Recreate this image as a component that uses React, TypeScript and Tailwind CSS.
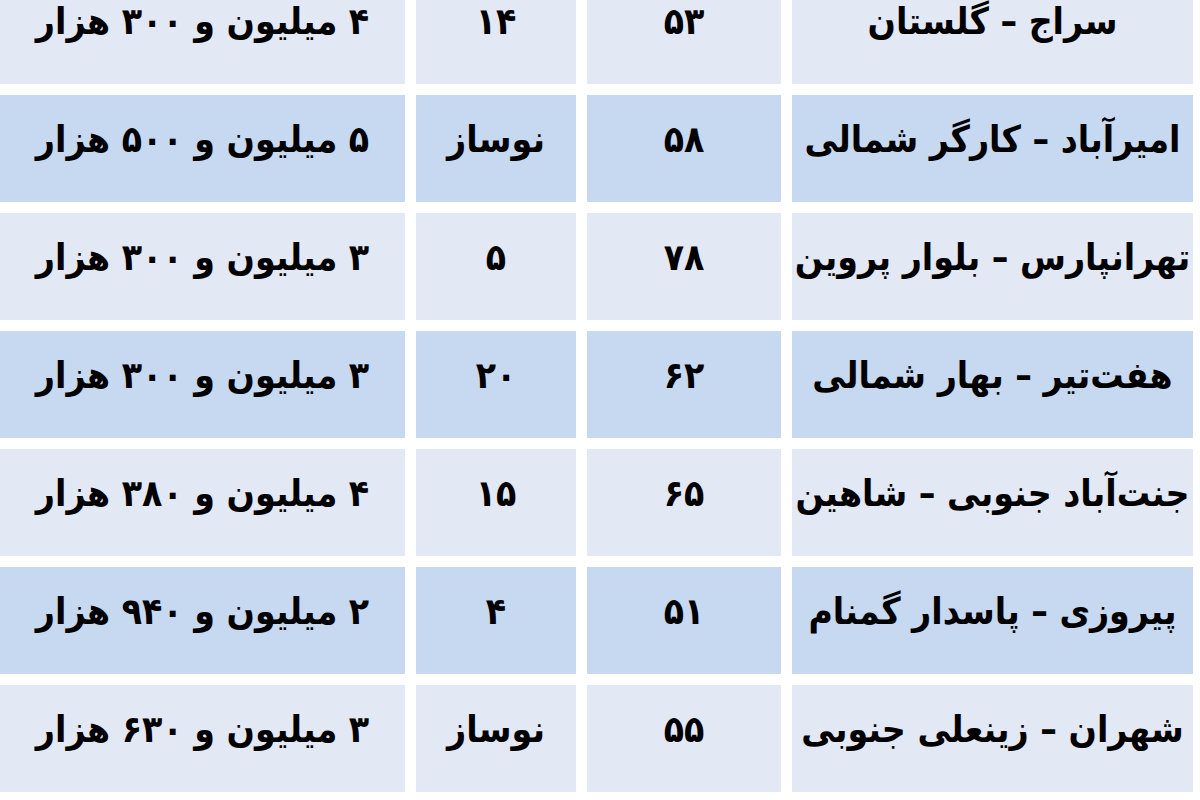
import React from "react";

const rows: [string, string, string, string][] = [
  ["۴ میلیون و ۳۰۰ هزار", "۱۴", "۵۳", "سراج – گلستان"],
  ["۵ میلیون و ۵۰۰ هزار", "نوساز", "۵۸", "امیرآباد – کارگر شمالی"],
  ["۳ میلیون و ۳۰۰ هزار", "۵", "۷۸", "تهرانپارس – بلوار پروین"],
  ["۳ میلیون و ۳۰۰ هزار", "۲۰", "۶۲", "هفت‌تیر – بهار شمالی"],
  ["۴ میلیون و ۳۸۰ هزار", "۱۵", "۶۵", "جنت‌آباد جنوبی – شاهین"],
  ["۲ میلیون و ۹۴۰ هزار", "۴", "۵۱", "پیروزی – پاسدار گمنام"],
  ["۳ میلیون و ۶۳۰ هزار", "نوساز", "۵۵", "شهران – زینعلی جنوبی"],
];

export default function App() {
  return (
    <div className="relative w-[1200px] h-[800px] overflow-hidden bg-white" style={{ fontFamily: '"DejaVu Sans Condensed", "DejaVu Sans", sans-serif' }}>
      <div className="mt-[-23px] grid grid-cols-[405px_160px_194px_401px] gap-x-[11px] gap-y-[11px] auto-rows-[107px]">
        {rows.map((r, i) => {
          const bg = i % 2 === 0 ? "bg-[#e3e8f5]" : "bg-[#c6d9f1]";
          return (
            <React.Fragment key={i}>
              {r.map((c, j) => (
                <div key={j} className={`${bg} flex items-center justify-center pb-[18px]`}>
                  <span dir="rtl" className="text-[37px] font-bold text-black whitespace-nowrap leading-none">
                    {c}
                  </span>
                </div>
              ))}
            </React.Fragment>
          );
        })}
      </div>
    </div>
  );
}
